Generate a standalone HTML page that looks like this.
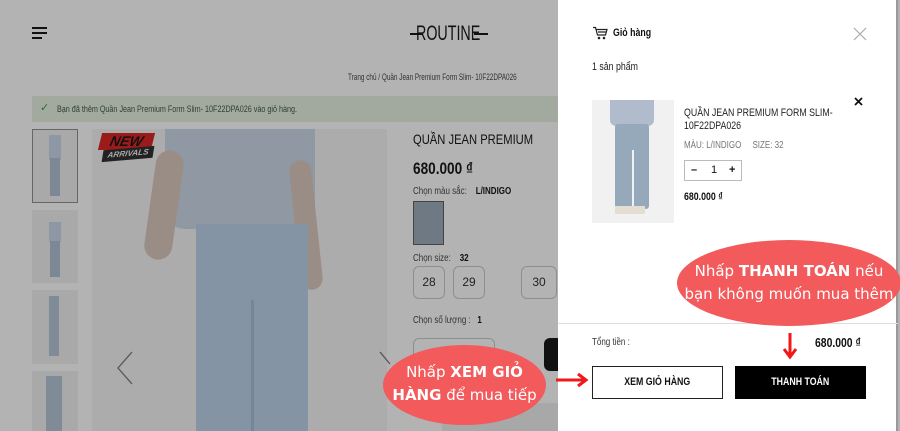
<!DOCTYPE html>
<html><head><meta charset="utf-8"><style>
*{margin:0;padding:0;box-sizing:border-box}
body{width:900px;height:431px;overflow:hidden;position:relative;background:#b3b3b3;font-family:"Liberation Sans",sans-serif;color:#1a1a1a}
.a{position:absolute}
.n{transform:scaleX(.8);transform-origin:left top;white-space:nowrap}
.t{font-size:10px;color:#333;white-space:nowrap}
.sz{position:absolute;top:266px;width:32px;height:33px;border:1px solid #8e8e8e;border-radius:6px;font-size:12px;text-align:center;line-height:31px;color:#222}
.panel{position:absolute;left:558px;top:0;width:340px;height:431px;background:#fff;border-right:2px solid #999}
.ell{position:absolute;background:#f25a5c;border-radius:50%;color:#fff;font-family:"DejaVu Sans",sans-serif;text-align:center;font-size:15px;line-height:23px}
.ci{display:inline-block;transform:scaleX(.8)}
</style></head><body>
<!-- header -->
<div class="a" style="left:32px;top:27px;width:15px;height:2px;background:#111"></div>
<div class="a" style="left:32px;top:32px;width:15px;height:2px;background:#111"></div>
<div class="a" style="left:32px;top:37px;width:10px;height:2px;background:#111"></div>
<div class="a" style="left:410px;top:33px;width:12px;height:1.5px;background:#111"></div>
<div class="a n" style="left:416px;top:22px;font-size:21px;color:#111;transform:scaleX(.68)">ROUTINE</div>
<div class="a" style="left:474px;top:33px;width:14px;height:1.5px;background:#111"></div>
<div class="a t n" style="left:348px;top:72px;font-size:9px;transform:scaleX(.71)">Trang chủ / Quần Jean Premium Form Slim- 10F22DPA026</div>
<div class="a" style="left:32px;top:96px;width:528px;height:26px;background:#a2aaa0"></div>
<div class="a" style="left:40px;top:101px;color:#2d6b2d;font-size:11px">✓</div>
<div class="a t n" style="left:57px;top:104px;color:#2f3f2f;font-size:9px">Bạn đã thêm Quần Jean Premium Form Slim- 10F22DPA026 vào giỏ hàng.</div>
<!-- thumbs -->
<div class="a" style="left:32px;top:129px;width:46px;height:74px;background:#a9a9a9;border:1px solid #666"></div>
<div class="a" style="left:32px;top:210px;width:46px;height:73px;background:#a9a9a9"></div>
<div class="a" style="left:32px;top:290px;width:46px;height:74px;background:#a9a9a9"></div>
<div class="a" style="left:32px;top:371px;width:46px;height:60px;background:#a9a9a9"></div>
<div class="a" style="left:49px;top:135px;width:12px;height:25px;background:#8e98a4"></div>
<div class="a" style="left:50px;top:158px;width:10px;height:38px;background:#7d8896"></div>
<div class="a" style="left:49px;top:222px;width:12px;height:20px;background:#8e98a4"></div>
<div class="a" style="left:50px;top:241px;width:10px;height:36px;background:#7d8896"></div>
<div class="a" style="left:49px;top:296px;width:10px;height:60px;background:#808b98"></div>
<div class="a" style="left:46px;top:376px;width:16px;height:55px;background:#808b98"></div>
<!-- main image -->
<div class="a" style="left:92px;top:129px;width:295px;height:302px;background:#acacac"></div>
<div class="a" style="left:165px;top:129px;width:150px;height:100px;background:#9098a3;border-radius:0 0 20px 20px"></div>
<div class="a" style="left:150px;top:150px;width:28px;height:110px;background:#9a8d86;border-radius:14px;transform:rotate(8deg)"></div>
<div class="a" style="left:295px;top:160px;width:22px;height:130px;background:#9a8d86;border-radius:11px;transform:rotate(-6deg)"></div>
<div class="a" style="left:196px;top:224px;width:112px;height:207px;background:#8494a4"></div>
<div class="a" style="left:251px;top:300px;width:3px;height:131px;background:#76869a"></div>
<svg class="a" style="left:115px;top:350px" width="20" height="36"><path d="M17 2 L3 18 L17 34" stroke="#555" stroke-width="1.3" fill="none"/></svg>
<svg class="a" style="left:378px;top:350px" width="14" height="36"><path d="M2 2 L12 14" stroke="#555" stroke-width="1.3" fill="none"/></svg>
<div class="a" style="left:100px;top:133px;width:53px;height:17px;background:#9b1b1b;transform:skew(-14deg);color:#111;font-weight:bold;font-style:italic;font-size:14px;text-align:center;line-height:17px">NEW</div>
<div class="a" style="left:103px;top:148px;width:50px;height:12px;background:#222;transform:skew(-14deg) rotate(-5deg);color:#aaa;font-weight:bold;font-style:italic;font-size:8px;text-align:center;line-height:12px">ARRIVALS</div>
<!-- info -->
<div class="a n" style="left:413px;top:131px;font-size:14px;color:#111">QUẦN JEAN PREMIUM</div>
<div class="a n" style="left:413px;top:159px;font-size:17px;font-weight:bold;color:#111">680.000 ₫</div>
<div class="a t n" style="left:413px;top:186px">Chọn màu sắc: &nbsp;&nbsp;&nbsp;<b style="color:#111">L/INDIGO</b></div>
<div class="a" style="left:413px;top:201px;width:31px;height:44px;background:#6f7984;border:1px solid #444"></div>
<div class="a t n" style="left:413px;top:253px">Chọn size: &nbsp;&nbsp;&nbsp;<b style="color:#111">32</b></div>
<div class="sz" style="left:413px">28</div><div class="sz" style="left:453px">29</div><div class="sz" style="left:521px;width:36px">30</div>
<div class="a t n" style="left:413px;top:315px">Chọn số lượng : &nbsp;&nbsp;<b style="color:#111">1</b></div>
<div class="a" style="left:413px;top:338px;width:82px;height:40px;border:1px solid #8e8e8e;border-radius:6px"></div>
<div class="a" style="left:544px;top:338px;width:20px;height:33px;background:#111;border-radius:6px"></div>
<div class="a" style="left:442px;top:403px;width:118px;height:28px;background:#a8a8a8"></div>
<!-- panel -->
<div class="panel">
<svg class="a" style="left:34px;top:26px" width="16" height="14"><path d="M1 1.5 H3.5 L5.5 9 H13.5 L15 3.5 H4.5 M6 6 H14" stroke="#222" stroke-width="1.2" fill="none"/><circle cx="7" cy="12" r="1.3" fill="#222"/><circle cx="12" cy="12" r="1.3" fill="#222"/></svg>
<div class="a n" style="left:55px;top:27px;font-size:11px;font-weight:bold;color:#111">Giỏ hàng</div>
<svg class="a" style="left:295px;top:27px" width="14" height="14"><path d="M1 1 L13 13 M13 1 L1 13" stroke="#aaa" stroke-width="1.2"/></svg>
<div class="a n" style="left:34px;top:61px;font-size:11px;color:#222">1 sản phẩm</div>
<div class="a" style="left:34px;top:100px;width:82px;height:123px;background:#f1f1f1"></div>
<div class="a" style="left:52px;top:100px;width:44px;height:26px;background:#b0bccb;border-radius:0 0 6px 6px"></div>
<div class="a" style="left:57px;top:124px;width:34px;height:85px;background:#96a9bb;border-radius:3px"></div>
<div class="a" style="left:74px;top:150px;width:2px;height:60px;background:#f1f1f1"></div>
<div class="a" style="left:57px;top:206px;width:30px;height:8px;background:#e4ddd2"></div>
<svg class="a" style="left:296px;top:97px" width="9" height="9"><path d="M1 1 L8 8 M8 1 L1 8" stroke="#111" stroke-width="1.8"/></svg>
<div class="a n" style="left:126px;top:107px;font-size:11px;color:#222;line-height:13px">QUẦN JEAN PREMIUM FORM SLIM-<br>10F22DPA026</div>
<div class="a n" style="left:126px;top:140px;font-size:10px;color:#777">MÀU: L/INDIGO &nbsp;&nbsp;&nbsp; SIZE: 32</div>
<div class="a" style="left:126px;top:160px;width:58px;height:21px;border:1px solid #bbb;font-size:11px;line-height:19px;color:#111"><span style="position:absolute;left:6px;font-weight:bold">–</span><span style="position:absolute;left:26px">1</span><span style="position:absolute;left:44px;font-weight:bold">+</span></div>
<div class="a n" style="left:126px;top:191px;font-size:11px;font-weight:bold;color:#111">680.000 ₫</div>
<div class="a" style="left:0;top:323px;width:340px;height:1px;background:#ddd"></div>
<div class="a n" style="left:34px;top:337px;font-size:10px;color:#333">Tổng tiền :</div>
<div class="a n" style="left:257px;top:335px;font-size:13px;font-weight:bold;color:#111">680.000 ₫</div>
<div class="a" style="left:34px;top:366px;width:131px;height:33px;border:1px solid #222;font-size:11px;font-weight:bold;text-align:center;line-height:31px;color:#111"><span class="ci">XEM GIỎ HÀNG</span></div>
<div class="a" style="left:177px;top:366px;width:131px;height:33px;background:#000;font-size:11px;font-weight:bold;text-align:center;line-height:33px;color:#fff"><span class="ci">THANH TOÁN</span></div>
</div>
<!-- callouts -->
<div class="ell" style="left:677px;top:240px;width:224px;height:86px;padding-top:20px">Nhấp <b>THANH TOÁN</b> nếu<br>bạn không muốn mua thêm</div>
<div class="ell" style="left:383px;top:345px;width:163px;height:80px;padding-top:16px">Nhấp <b>XEM GIỎ</b><br><b>HÀNG</b> để mua tiếp</div>
<svg class="a" style="left:555px;top:372px" width="36" height="16"><path d="M1 8 H30 M23 2 L31 8 L23 14" stroke="#f01818" stroke-width="3" fill="none"/></svg>
<svg class="a" style="left:782px;top:332px" width="16" height="28"><path d="M8 1 V24 M2 17 L8 25 L14 17" stroke="#f01818" stroke-width="3" fill="none"/></svg>
</body></html>
